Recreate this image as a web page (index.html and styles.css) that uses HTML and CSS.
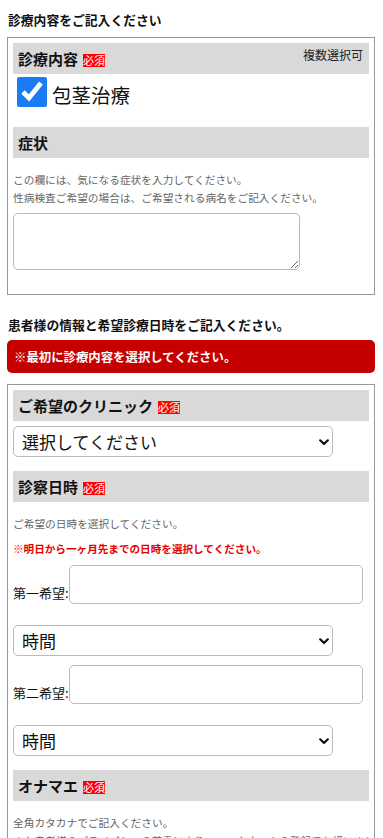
FILE: index.html
```html
<!DOCTYPE html>
<html lang="ja">
<head>
<meta charset="utf-8">
<title>予約フォーム</title>
<link rel="stylesheet" href="styles.css">
</head>
<body>
<div class="page">
  <h2 class="sec-title t1">診療内容をご記入ください</h2>
  <div class="box">
    <div class="field-head">
      <span class="fh-title">診療内容</span><span class="req">必須</span>
      <span class="fh-note">複数選択可</span>
    </div>
    <label class="check-row"><input type="checkbox" class="chk" checked><span class="chk-label">包茎治療</span></label>
    <div class="field-head head-gap20"><span class="fh-title">症状</span></div>
    <p class="desc">この欄には、気になる症状を入力してください。<br>性病検査ご希望の場合は、ご希望される病名をご記入ください。</p>
    <textarea class="ta"></textarea>
  </div>

  <h2 class="sec-title t2">患者様の情報と希望診療日時をご記入ください。</h2>
  <div class="alert">※最初に診療内容を選択してください。</div>

  <div class="box box2">
    <div class="field-head">
      <span class="fh-title">ご希望のクリニック</span><span class="req">必須</span>
    </div>
    <div class="sel-wrap sel-first">
      <select class="sel"><option>選択してください</option></select>
      <svg class="chev" width="10" height="7" viewBox="0 0 10 7"><path d="M1.2 1.3 L5 5 L8.8 1.3" fill="none" stroke="#111" stroke-width="2.2" stroke-linecap="round" stroke-linejoin="round"/></svg>
    </div>

    <div class="field-head head-gap14">
      <span class="fh-title">診察日時</span><span class="req">必須</span>
    </div>
    <p class="desc">ご希望の日時を選択してください。</p>
    <p class="note-red">※明日から一ヶ月先までの日時を選択してください。</p>
    <div class="date-row row-first">
      <span class="date-label">第一希望:</span><input type="text" class="date-input">
    </div>
    <div class="sel-wrap sel-time">
      <select class="sel"><option>時間</option></select>
      <svg class="chev" width="10" height="7" viewBox="0 0 10 7"><path d="M1.2 1.3 L5 5 L8.8 1.3" fill="none" stroke="#111" stroke-width="2.2" stroke-linecap="round" stroke-linejoin="round"/></svg>
    </div>
    <div class="date-row row-second">
      <span class="date-label">第二希望:</span><input type="text" class="date-input">
    </div>
    <div class="sel-wrap sel-time">
      <select class="sel"><option>時間</option></select>
      <svg class="chev" width="10" height="7" viewBox="0 0 10 7"><path d="M1.2 1.3 L5 5 L8.8 1.3" fill="none" stroke="#111" stroke-width="2.2" stroke-linecap="round" stroke-linejoin="round"/></svg>
    </div>

    <div class="field-head head-gap14">
      <span class="fh-title">オナマエ</span><span class="req">必須</span>
    </div>
    <p class="desc">全角カタカナでご記入ください。<br>また患者様のプライバシーの尊重により、ニックネームの登録でも構いません。</p>
  </div>
</div>
</body>
</html>
```

FILE: styles.css
```css
* {
  box-sizing: border-box;
}

body {
  margin: 0;
  background: #fff;
  color: #111;
  font-family: "Noto Sans CJK JP", "Noto Sans", sans-serif;
}

.page {
  width: 368px;
  margin-left: 7px;
  padding-top: 11px;
}

.sec-title {
  margin: 0 0 0 1px;
  font-size: 12.8px;
  line-height: 18px;
  font-weight: bold;
  color: #111;
}

.t1 {
  margin-bottom: 8px;
}

.t2 {
  margin-top: 21px;
  margin-bottom: 6px;
}

.box {
  border: 1px solid #999;
  padding: 5px;
}

.box2 {
  margin-top: 11px;
}

.field-head {
  height: 31px;
  background: #d9d9d9;
  display: flex;
  align-items: center;
  padding: 0 6px 0 5px;
}

.fh-title {
  font-size: 15px;
  font-weight: bold;
  line-height: 18px;
  color: #111;
}

.req {
  background: #f00;
  color: #fff;
  font-size: 11px;
  line-height: 13px;
  margin-left: 5px;
  margin-top: 3px;
}

.fh-note {
  margin-left: auto;
  align-self: flex-start;
  margin-top: 4px;
  font-size: 12px;
  line-height: 16px;
  color: #222;
}

.check-row {
  display: flex;
  align-items: center;
  margin-top: 3px;
  height: 30px;
}

.chk {
  width: 30px;
  height: 30px;
  margin: 0 0 0 4px;
  accent-color: #1a7cf5;
}

.chk-label {
  margin-left: 5px;
  font-size: 19.5px;
  line-height: 30px;
  padding-top: 6px;
  color: #111;
}

.head-gap20 {
  margin-top: 20px;
}

.head-gap14 {
  margin-top: 14px;
}

.desc {
  margin: 13px 0 0;
  font-size: 10.7px;
  line-height: 18px;
  color: #666;
  white-space: nowrap;
  overflow: hidden;
}

.ta {
  display: block;
  margin: 6px 0 19px;
  width: 287px;
  height: 57px;
  border: 1px solid #bbb;
  border-radius: 5px;
  background: #fff;
}

.alert {
  height: 33px;
  background: #c40000;
  border-radius: 5px;
  color: #fff;
  font-weight: bold;
  font-size: 12.4px;
  display: flex;
  align-items: center;
  padding-left: 7px;
}

.sel-wrap {
  position: relative;
  width: 320px;
  height: 31px;
}

.sel-first {
  margin-top: 5px;
}

.sel-time {
  margin-top: 21px;
}

.sel {
  appearance: none;
  -webkit-appearance: none;
  display: block;
  width: 100%;
  height: 100%;
  border: 1px solid #bbb;
  border-radius: 5px;
  background: #fff;
  color: #111;
  font-family: "Noto Sans CJK JP", "Noto Sans", sans-serif;
  font-size: 17px;
  padding: 0 0 0 8px;
  margin: 0;
}

.chev {
  position: absolute;
  right: 4px;
  top: 13px;
}

.note-red {
  margin: 7px 0 0;
  font-size: 10.6px;
  line-height: 18px;
  font-weight: bold;
  color: #e60000;
}

.date-row {
  display: flex;
  align-items: flex-end;
}

.row-first {
  margin-top: 7px;
}

.row-second {
  margin-top: 9px;
}

.date-label {
  width: 56px;
  font-size: 13px;
  line-height: 18px;
  margin-bottom: 2px;
  color: #111;
  white-space: nowrap;
}

.date-input {
  width: 294px;
  height: 39px;
  border: 1px solid #bbb;
  border-radius: 5px;
  background: #fff;
  margin: 0;
}
```
